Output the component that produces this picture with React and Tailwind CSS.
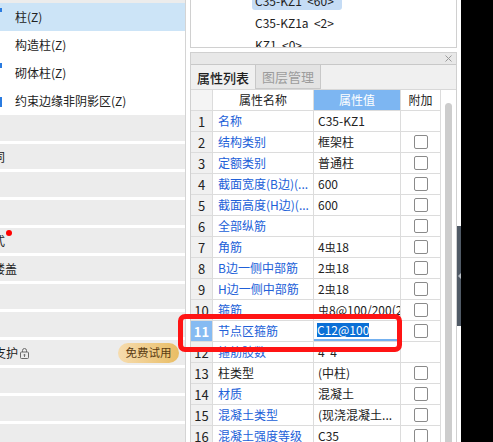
import React from 'react';

const rows = [
  { n: 1, name: '名称', val: 'C35-KZ1', cb: false },
  { n: 2, name: '结构类别', val: '框架柱', cb: true },
  { n: 3, name: '定额类别', val: '普通柱', cb: true },
  { n: 4, name: '截面宽度(B边)(...', val: '600', cb: true },
  { n: 5, name: '截面高度(H边)(...', val: '600', cb: true },
  { n: 6, name: '全部纵筋', val: '', cb: true },
  { n: 7, name: '角筋', val: ['4', '虫', '18'], cb: true },
  { n: 8, name: 'B边一侧中部筋', val: ['2', '虫', '18'], cb: true },
  { n: 9, name: 'H边一侧中部筋', val: ['2', '虫', '18'], cb: true },
  { n: 10, name: '箍筋', val: ['', '虫', '8@100/200(2)'], cb: true },
  { n: 11, name: '节点区箍筋', val: 'C12@100', cb: true, edit: true },
  { n: 12, name: '箍筋肢数', val: '4*4', cb: false },
  { n: 13, name: '柱类型', val: '(中柱)', cb: true, black: true },
  { n: 14, name: '材质', val: '混凝土', cb: true },
  { n: 15, name: '混凝土类型', val: '(现浇混凝土...', cb: true },
  { n: 16, name: '混凝土强度等级', val: 'C35', cb: true },
];

function Val({ v }) {
  if (Array.isArray(v)) {
    return (
      <span className="whitespace-nowrap">
        {v[0]}
        <span className="text-[11px]">{v[1]}</span>
        {v[2]}
      </span>
    );
  }
  return <span className="whitespace-nowrap">{v}</span>;
}

function Lock() {
  return (
    <svg width="9" height="12" viewBox="0 0 9 12" className="ml-[2px]">
      <path d="M2.5 5V3.5a2 2 0 0 1 4 0V5" fill="none" stroke="#6b6b6b" strokeWidth="1" />
      <rect x="0.5" y="5" width="8" height="6.5" rx="1" fill="none" stroke="#6b6b6b" strokeWidth="1" />
      <circle cx="4.5" cy="8" r="0.9" fill="#6b6b6b" />
      <path d="M4.5 8.5v1.5" stroke="#6b6b6b" strokeWidth="0.9" />
    </svg>
  );
}

function GrayRow({ h = 'h-[25px]', children, last }) {
  return (
    <div className={`${h} bg-[#ececec] shrink-0 flex items-center ${last ? '' : 'mb-[3px]'} overflow-hidden`}>
      {children}
    </div>
  );
}

export default function App() {
  return (
    <div className="relative w-[493px] h-[442px] overflow-hidden flex bg-white text-[12px] text-[#222] font-['Noto_Sans_CJK_SC','Noto_Sans',sans-serif] leading-none">
      {/* Left panel */}
      <div className="w-[186px] h-full shrink-0 border-r border-[#d4d4d4] bg-white flex flex-col overflow-hidden relative">
        <div className="h-[3px] bg-[#ececec] shrink-0" />
        <div className="h-[28px] shrink-0 bg-[#cce4f7] flex items-center pl-[15px] relative">
          <span className="absolute left-0 top-[5px] w-[2px] h-[4px] bg-[#2a7be0]" />
          柱(Z)
        </div>
        <div className="h-[28px] shrink-0 flex items-center pl-[15px]">构造柱(Z)</div>
        <div className="h-[28px] shrink-0 flex items-center pl-[15px] relative">
          <span className="absolute left-0 top-[4px] w-[2px] h-[5px] bg-[#2a7be0]" />
          砌体柱(Z)
        </div>
        <div className="h-[28px] shrink-0 flex items-center pl-[15px] relative">
          <span className="absolute left-0 top-[10px] w-[2px] h-[10px] bg-[#2a7be0]" />
          约束边缘非阴影区(Z)
        </div>
        <GrayRow h="h-[26px]" />
        <GrayRow>
          <span className="ml-[-7px]">同</span>
        </GrayRow>
        <GrayRow />
        <GrayRow />
        <GrayRow>
          <span className="ml-[-7px]">式</span>
          <span className="w-[6px] h-[6px] rounded-full bg-[#ff0000] self-start mt-[2px] ml-[1px]" />
        </GrayRow>
        <GrayRow>
          <span className="ml-[-7px]">楼盖</span>
        </GrayRow>
        <GrayRow />
        <GrayRow />
        <GrayRow>
          <div className="flex-1 flex items-center justify-between pr-[6px]">
            <div className="flex items-center">
              <span className="ml-[-6px]">支护</span>
              <Lock />
            </div>
            <span className="h-[20px] w-[61px] rounded-full bg-gradient-to-r from-[#f6dcae] to-[#e9bd63] text-[#5b3c12] text-[11.5px] flex items-center justify-center">
              免费试用
            </span>
          </div>
        </GrayRow>
        <GrayRow />
        <GrayRow />
        <GrayRow last />
      </div>

      {/* Right column */}
      <div className="w-[267px] shrink-0 ml-[4px] h-full flex flex-col">
        {/* tree box */}
        <div className="h-[48px] shrink-0 border-l border-r border-b border-[#d0d0d0] bg-white overflow-hidden">
          <div className="mt-[-10px] pl-[61px] flex flex-col">
            <div className="h-[22px] flex items-center">
              <span className="h-[18px] w-[90px] rounded-[3px] bg-[#c5dcf5] flex items-center pl-[3px] whitespace-pre">C35-KZ1  &lt;60&gt;</span>
            </div>
            <div className="h-[22px] flex items-center pl-[3px] whitespace-pre">C35-KZ1a  &lt;2&gt;</div>
            <div className="h-[22px] flex items-center pl-[3px] whitespace-pre">KZ1  &lt;0&gt;</div>
          </div>
        </div>

        {/* property panel */}
        <div className="mt-[4px] flex-1 flex flex-col border-l border-r border-t border-[#d0d0d0] overflow-hidden">
          <div className="h-[11px] shrink-0 bg-[#e8e8e8] flex items-center justify-end pr-[4px]">
            <svg width="7" height="7" viewBox="0 0 7 7">
              <path d="M0.5 0.5L6.5 6.5M6.5 0.5L0.5 6.5" stroke="#9a9a9a" strokeWidth="1" />
            </svg>
          </div>
          <div className="h-[25px] shrink-0 bg-[#f0f0f0] border-t border-[#c8c8c8] flex">
            <div className="w-[65px] h-full border-r border-[#c8c8c8] flex items-center justify-center text-[13px] font-medium text-[#1e1e1e]">
              属性列表
            </div>
            <div className="w-[65px] h-full border-r border-b border-[#c8c8c8] bg-[#e3e3e3] flex items-center justify-center text-[13px] text-[#9c9c9c]">
              图层管理
            </div>
          </div>

          <div className="flex-1 flex bg-white border-t border-[#d8d8d8] overflow-hidden">
            <div className="w-[250px] shrink-0 flex flex-col">
              {/* header */}
              <div className="h-[21px] shrink-0 grid grid-cols-[22px_101px_87px_40px] border-b border-[#dcdcdc]">
                <div className="border-r border-[#dcdcdc] bg-[#f4f4f4]" />
                <div className="border-r border-[#dcdcdc] flex items-center justify-center">属性名称</div>
                <div className="border-r border-[#dcdcdc] bg-[#7db6f2] text-white flex items-center justify-center">属性值</div>
                <div className="border-r border-[#dcdcdc] flex items-center justify-center">附加</div>
              </div>
              {rows.map((r) => (
                <div key={r.n} className="h-[21px] shrink-0 grid grid-cols-[22px_101px_87px_40px] border-b border-[#dcdcdc]">
                  <div
                    className={`border-r border-[#dcdcdc] flex items-center justify-center text-[13px] ${
                      r.edit ? 'bg-[#86bbf2] text-white font-semibold' : 'bg-[#f0f0f0]'
                    }`}
                  >
                    {r.n}
                  </div>
                  <div
                    className={`border-r border-[#dcdcdc] flex items-center pl-[5px] overflow-hidden whitespace-nowrap text-[12px] ${
                      r.black ? 'text-[#222]' : 'text-[#2160d8]'
                    }`}
                  >
                    {r.name}
                  </div>
                  {r.edit ? (
                    <div className="border-r border-[#dcdcdc] border-b-2 border-b-[#74b1f0] flex items-center pl-[3px] overflow-hidden">
                      <span className="bg-[#0a6fd6] text-white h-[14px] flex items-center whitespace-nowrap">C12@100</span>
                    </div>
                  ) : (
                    <div className="border-r border-[#dcdcdc] flex items-center pl-[4px] overflow-hidden">
                      <Val v={r.val} />
                    </div>
                  )}
                  <div className="border-r border-[#dcdcdc] flex items-center justify-center">
                    {r.cb && <span className="w-[14px] h-[14px] border border-[#8a8a8a] rounded-[2px] bg-white" />}
                  </div>
                </div>
              ))}
            </div>
            {/* scrollbar area */}
            <div className="flex-1 flex pl-[4px] pt-[13px]">
              <div className="w-[7px] h-full rounded-t-full bg-[#cdcdcd]" />
            </div>
          </div>
        </div>
      </div>

      {/* splitter strip */}
      <div className="w-[4px] shrink-0 h-full bg-white flex flex-col">
        <div className="mt-[226px] h-[100px] bg-[#505a66] flex items-center justify-center">
          <svg width="3" height="6" viewBox="0 0 3 6">
            <path d="M3 0L0 3L3 6Z" fill="#b8bec6" />
          </svg>
        </div>
      </div>
      <div className="flex-1 h-full bg-black" />

      {/* red annotation */}
      <div className="absolute left-[178px] top-[314px] w-[224px] h-[38px] border-[5px] border-[#ff1414] rounded-[7px]" />
    </div>
  );
}
